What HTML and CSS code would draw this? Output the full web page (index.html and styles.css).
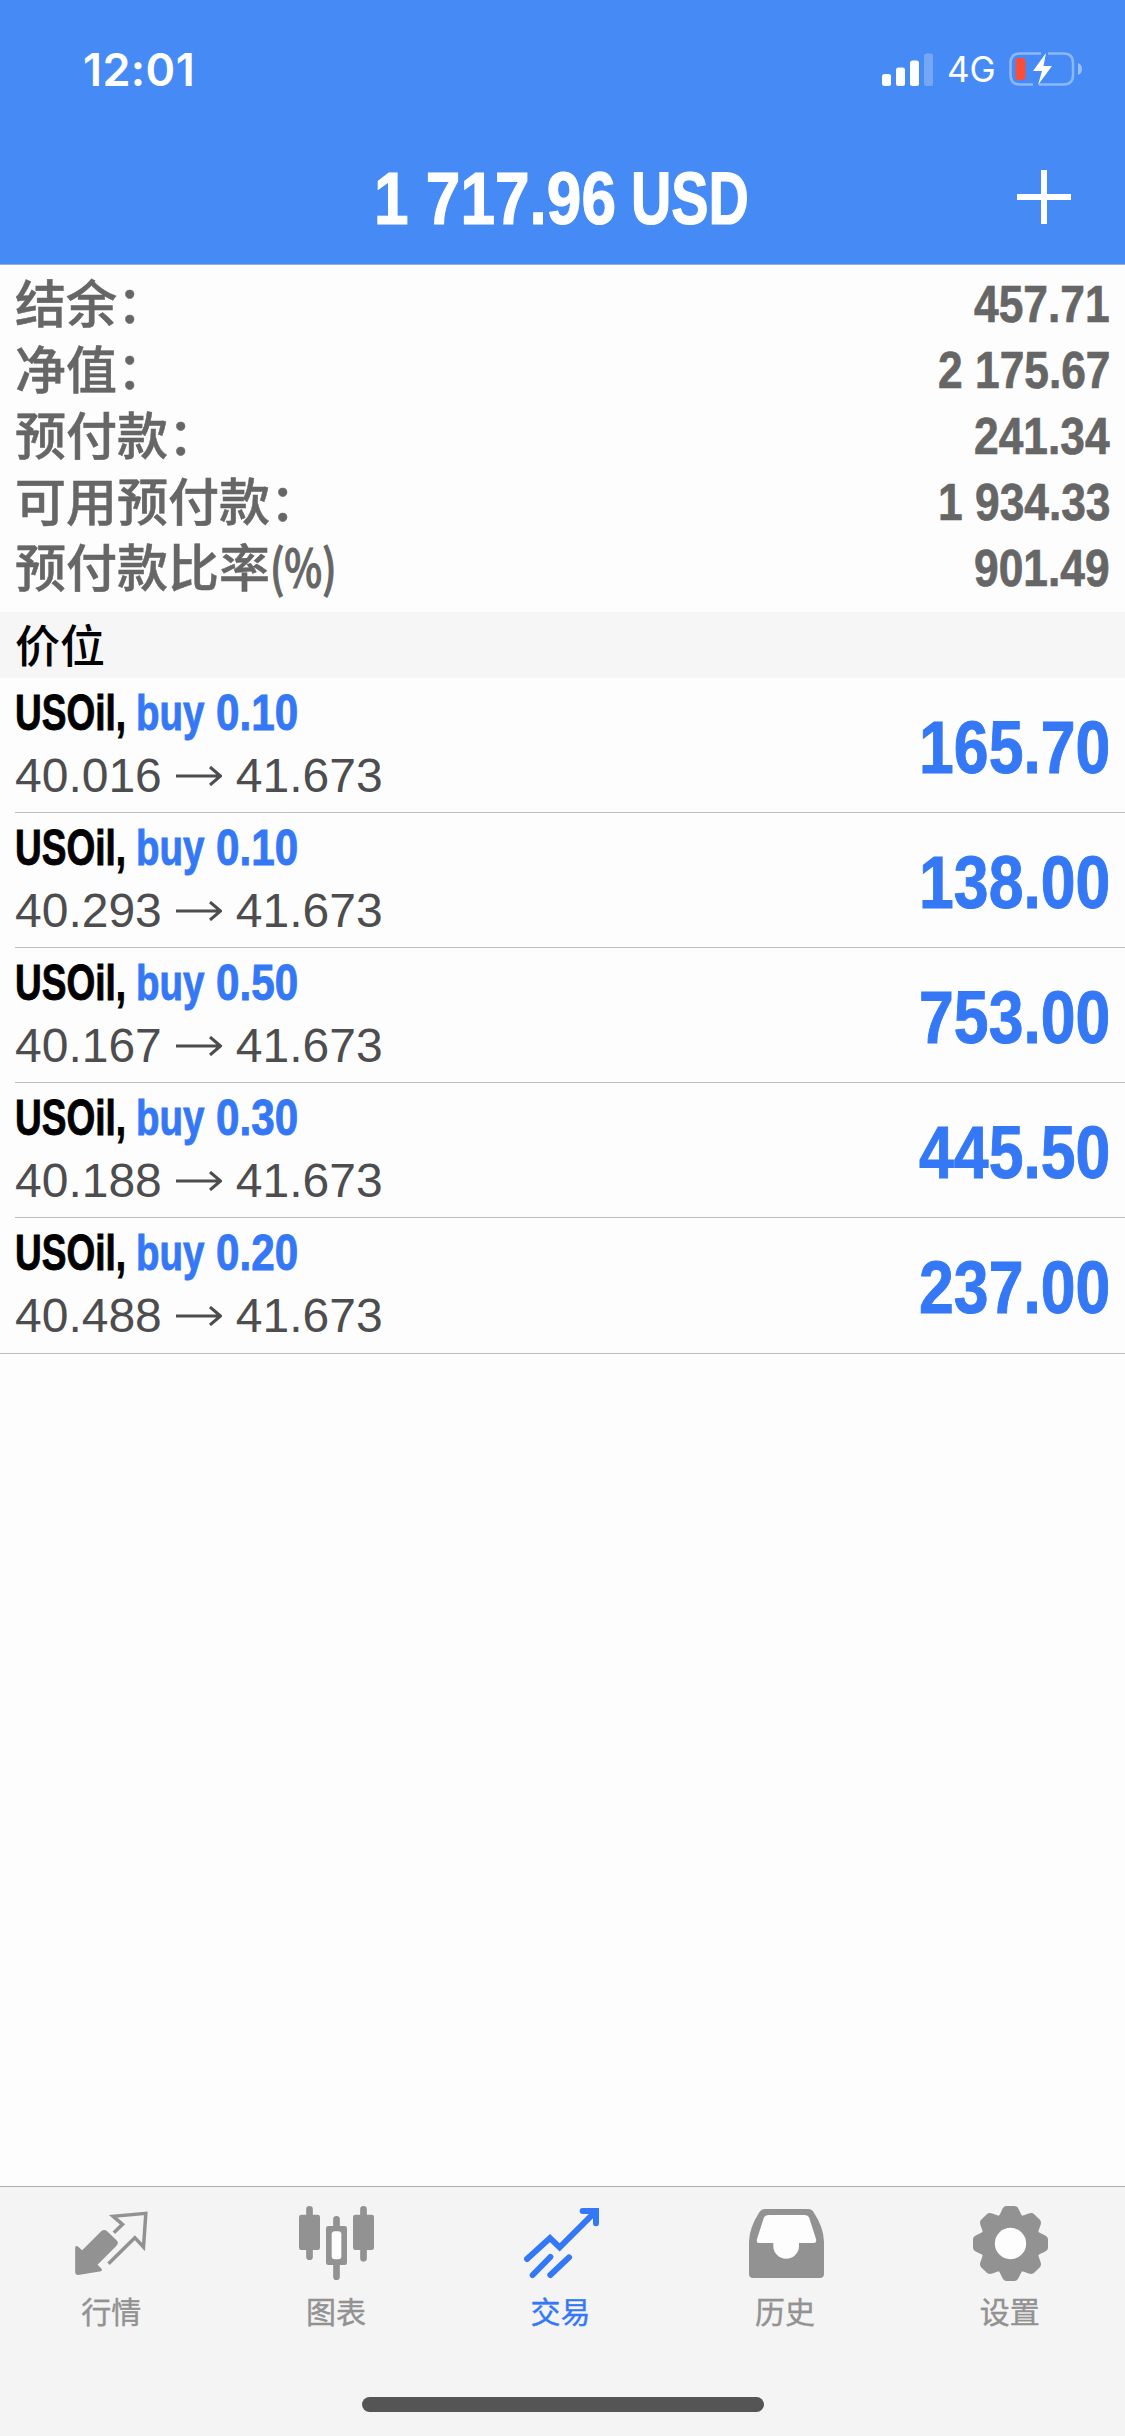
FILE: index.html
```html
<!DOCTYPE html>
<html lang="zh-CN">
<head>
<meta charset="utf-8">
<title>交易</title>
<link rel="stylesheet" href="styles.css">
</head>
<body>
<div class="screen">
  <header class="header">
    <div class="status">
      <span class="time">12:01</span>
      <div class="indicators">
        <svg class="signal" viewBox="0 0 51 33"><g fill="#fff"><rect x="0" y="21" width="9" height="12" rx="2.5"/><rect x="14" y="14.500" width="9" height="18.500" rx="2.500"/><rect x="28" y="7.500" width="9" height="25.500" rx="2.500"/><rect x="42" y="0.500" width="9" height="32.500" rx="2.500" opacity=".25"/></g></svg>
        <span class="network">4G</span>
        <svg class="battery" viewBox="0 0 74 34">
          <path d="M32 1.500H11Q1.500 1.500 1.500 11V23Q1.500 32.500 11 32.500H24M30 32.500H54.500Q64 32.500 64 23V11Q64 1.500 54.500 1.500H39" fill="none" stroke="#fff" stroke-opacity=".38" stroke-width="2.500"/>
          <path d="M69 11Q73 12.500 73 17T69 23Z" fill="#fff" opacity=".45"/>
          <rect x="6.500" y="6" width="10" height="22" rx="3" fill="#fb4d38"/>
          <path d="M37 1L24 19H33L29 33L43 14H34.500Z" fill="#fff"/>
        </svg>
      </div>
    </div>
    <div class="navbar">
      <h1 class="total"><span class="total-sum"><span class="squeeze">1 717.96</span></span><span class="total-cur"><span class="squeeze">USD</span></span></h1>
      <svg class="plus" viewBox="0 0 54 54"><path d="M0 27H54M27 0V54" stroke="#fff" stroke-width="6"/></svg>
    </div>
  </header>

  <section class="summary">
    <div class="line"><span class="label">结余：</span><span class="amount">457.71</span></div>
    <div class="line"><span class="label">净值：</span><span class="amount">2 175.67</span></div>
    <div class="line"><span class="label">预付款：</span><span class="amount">241.34</span></div>
    <div class="line"><span class="label">可用预付款：</span><span class="amount">1 934.33</span></div>
    <div class="line"><span class="label">预付款比率<span class="percent">(%)</span></span><span class="amount">901.49</span></div>
  </section>

  <h2 class="section-title"><span>价位</span></h2>

  <main class="positions">
    <div class="position"><div class="info"><div class="deal"><span class="symbol">USOil,</span><span class="side">buy</span><span class="volume">0.10</span></div><div class="prices"><span>40.016</span><svg class="arrow" viewBox="0 0 46 20"><path d="M0 10H44M34 1L44.500 10L34 19"/></svg><span>41.673</span></div></div><span class="profit">165.70</span></div>
    <div class="position"><div class="info"><div class="deal"><span class="symbol">USOil,</span><span class="side">buy</span><span class="volume">0.10</span></div><div class="prices"><span>40.293</span><svg class="arrow" viewBox="0 0 46 20"><path d="M0 10H44M34 1L44.500 10L34 19"/></svg><span>41.673</span></div></div><span class="profit">138.00</span></div>
    <div class="position"><div class="info"><div class="deal"><span class="symbol">USOil,</span><span class="side">buy</span><span class="volume">0.50</span></div><div class="prices"><span>40.167</span><svg class="arrow" viewBox="0 0 46 20"><path d="M0 10H44M34 1L44.500 10L34 19"/></svg><span>41.673</span></div></div><span class="profit">753.00</span></div>
    <div class="position"><div class="info"><div class="deal"><span class="symbol">USOil,</span><span class="side">buy</span><span class="volume">0.30</span></div><div class="prices"><span>40.188</span><svg class="arrow" viewBox="0 0 46 20"><path d="M0 10H44M34 1L44.500 10L34 19"/></svg><span>41.673</span></div></div><span class="profit">445.50</span></div>
    <div class="position"><div class="info"><div class="deal"><span class="symbol">USOil,</span><span class="side">buy</span><span class="volume">0.20</span></div><div class="prices"><span>40.488</span><svg class="arrow" viewBox="0 0 46 20"><path d="M0 10H44M34 1L44.500 10L34 19"/></svg><span>41.673</span></div></div><span class="profit">237.00</span></div>
  </main>

  <footer class="footer">
    <nav class="tabs">
      <a class="tab">
        <svg class="icon" viewBox="224.500 108 225 225"><path d="M225 232Q228 225 235 231L246 241L303 184Q312 176 321 184L349 211Q357 219 349 227L292 284L302 294Q308 300 303 304L234 315Q225 315 225 306Z" fill="currentColor"/><path d="M341 188L367 163L339 139L437 130L430 231L404 203L325 281" fill="none" stroke="currentColor" stroke-width="10.500"/></svg>
        <span>行情</span>
      </a>
      <a class="tab">
        <svg class="icon" viewBox="897 108 225 225"><path d="M928.500 118V260M1090.500 118V265M1009.500 148V175M1009.500 280V320" stroke="currentColor" stroke-width="20" stroke-linecap="round"/><g fill="currentColor"><rect x="897" y="134" width="63" height="106" rx="7"/><rect x="1059" y="134" width="63" height="106" rx="7"/><rect x="978" y="168" width="63" height="117" rx="7"/></g><rect x="995" y="184" width="29" height="84" rx="9" fill="#fdfdfd"/></svg>
        <span>图表</span>
      </a>
      <a class="tab active">
        <svg class="icon" viewBox="312 108 225 225"><g fill="none" stroke="currentColor" stroke-width="18" stroke-linecap="round"><path d="M321 267L390 204L419 232L524 127"/><path d="M338 315L391 261M391 315L447 262"/><path d="M488 123H528V160" stroke-linejoin="round"/></g><path d="M505 114H537V146Z" fill="currentColor"/></svg>
        <span>交易</span>
      </a>
      <a class="tab">
        <svg class="icon" viewBox="132 108 225 225"><path d="M180 117H309Q320 117 326 127Q356 173 357 215V311Q357 324 344 324H145Q132 324 132 311V215Q133 173 163 127Q169 117 180 117Z" fill="currentColor"/><path d="M192 135H298Q309 135 313 145L333 207Q336 219 326 219H282V228A38.500 38.500 0 0 1 205 228V219H163Q153 219 156 207L176 145Q180 135 192 135Z" fill="#fdfdfd"/></svg>
        <span>历史</span>
      </a>
      <a class="tab">
        <svg class="icon" viewBox="-112.500 -112.500 225 225"><defs><path id="tooth" d="M-38 -78Q-31 -88 -26 -100Q-21 -112.500 -12 -112.500H12Q21 -112.500 26 -100Q31 -88 38 -78Z"/></defs><g fill="currentColor"><circle r="87"/><use href="#tooth"/><use href="#tooth" transform="rotate(45)"/><use href="#tooth" transform="rotate(90)"/><use href="#tooth" transform="rotate(135)"/><use href="#tooth" transform="rotate(180)"/><use href="#tooth" transform="rotate(225)"/><use href="#tooth" transform="rotate(270)"/><use href="#tooth" transform="rotate(315)"/></g><circle r="47" fill="#fdfdfd"/></svg>
        <span>设置</span>
      </a>
    </nav>
    <div class="home-bar"></div>
  </footer>
</div>
</body>
</html>
```
FILE: styles.css
```css
* {
  box-sizing: border-box;
}

body {
  margin: 0;
  background: #fdfdfd;
  font-family: "Liberation Sans", "Noto Sans CJK SC", sans-serif;
}

svg {
  display: block;
  flex: none;
}

.screen {
  display: flex;
  flex-direction: column;
  width: 1125px;
  height: 2436px;
  overflow: hidden;
}

/* Header */
.header {
  height: 265px;
  flex: none;
  background: #468bf5;
  border-bottom: 1px solid #8fb0e0;
  color: #fff;
}

.status {
  display: flex;
  justify-content: space-between;
  height: 138px;
  padding: 0 42px 0 83px;
  font-family: Inter, sans-serif;
}

.time {
  line-height: 139px;
  font-size: 45px;
  font-weight: 600;
  letter-spacing: 0.4px;
}

.indicators {
  display: flex;
  align-items: center;
}

.signal {
  width: 51px;
  height: 33px;
}

.network {
  width: 76px;
  padding-left: 14px;
  font-size: 35px;
  line-height: 141px;
  font-weight: 400;
}

.battery {
  width: 74px;
  height: 34px;
}

.navbar {
  display: flex;
  justify-content: space-between;
  height: 122px;
  padding: 0 54px 0 374px;
}

.total {
  display: flex;
  margin: 0;
  font-size: 74px;
  line-height: 122px;
  white-space: nowrap;
  -webkit-text-stroke: 1.2px currentColor;
}

.squeeze {
  display: block;
  transform-origin: left center;
}

.total-sum {
  width: 257px;
}

.total-sum .squeeze {
  transform: scaleX(0.84);
}

.total-cur {
  width: 120px;
}

.total-cur .squeeze {
  transform: scaleX(0.755);
}

.plus {
  width: 54px;
  height: 54px;
  margin-top: 32px;
}

/* Account summary */
.summary {
  flex: none;
  height: 347px;
  padding: 6px 15px 0;
  color: #666;
}

.line {
  display: flex;
  justify-content: space-between;
  height: 66px;
  line-height: 66px;
}

.label {
  display: flex;
  height: 60px;
  line-height: 60px;
  font-family: "Noto Sans CJK SC", sans-serif;
  font-size: 51px;
  font-weight: 500;
  -webkit-text-stroke: 0.5px currentColor;
}

.percent {
  -webkit-text-stroke: 1.2px currentColor;
  transform: scaleX(0.79);
  transform-origin: left center;
}

.amount {
  font-size: 51.5px;
  font-weight: 700;
  -webkit-text-stroke: 0.7px currentColor;
  transform: scaleX(0.86);
  transform-origin: right center;
}

.section-title {
  flex: none;
  height: 66px;
  margin: 0;
  padding-left: 15px;
  background: #f6f6f6;
  color: #000;
  font-family: "Noto Sans CJK SC", sans-serif;
  font-size: 45px;
  font-weight: 500;
  line-height: 63px;
}

/* Open positions */
.positions {
  flex: 1;
}

.position {
  display: flex;
  justify-content: space-between;
  height: 135px;
  margin-left: 15px;
  padding-right: 15px;
  border-bottom: 1px solid #bfbfc2;
}

.position:last-child {
  height: 136px;
  margin-left: 0;
  padding-left: 15px;
}

.deal {
  display: flex;
  height: 69px;
  line-height: 70px;
  font-size: 50px;
  font-weight: 700;
  color: #3478f6;
  -webkit-text-stroke: 0.9px currentColor;
}

.deal span {
  transform-origin: left center;
}

.symbol {
  width: 121px;
  color: #000;
  transform: scaleX(0.74);
}

.side {
  width: 80px;
  transform: scaleX(0.77);
}

.volume {
  width: 100px;
  transform: scaleX(0.845);
}

.prices {
  display: flex;
  align-items: center;
  height: 58px;
  font-size: 48px;
  line-height: 58px;
  color: #4d4d4f;
}

.arrow {
  width: 46px;
  height: 20px;
  margin: 0 14px;
  fill: none;
  stroke: currentColor;
  stroke-width: 3;
}

.profit {
  line-height: 140px;
  font-size: 74px;
  font-weight: 700;
  color: #3478f6;
  -webkit-text-stroke: 1px currentColor;
  transform: scaleX(0.845);
  transform-origin: right center;
}

/* Tab bar */
.footer {
  flex: none;
  height: 250px;
  border-top: 1px solid #adadad;
  background: #f4f4f4;
}

.tabs {
  display: grid;
  grid-template-columns: repeat(5, 1fr);
  height: 210px;
  padding: 19px 2px 0 0;
}

.tab {
  display: flex;
  flex-direction: column;
  align-items: center;
  color: #929292;
  font-family: "Noto Sans CJK SC", sans-serif;
  font-size: 30px;
  line-height: 44px;
}

.tab.active {
  color: #3478f6;
}

.tab span {
  margin: 7px 2px 0 0;
  -webkit-text-stroke: 0.4px currentColor;
}

.icon {
  width: 75px;
  height: 75px;
}

.home-bar {
  width: 402px;
  height: 15px;
  margin: 0 auto;
  border-radius: 8px;
  background: #555;
}
```
